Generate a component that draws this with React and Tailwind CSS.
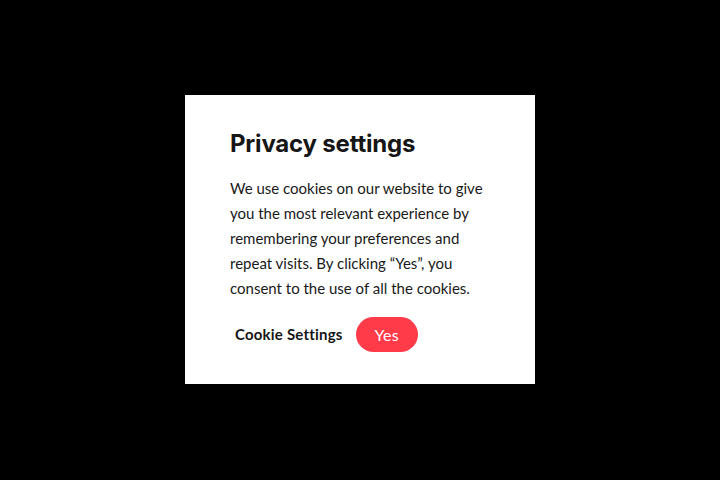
export default function App() {
  return (
    <div className="w-[720px] h-[480px] bg-black flex items-center justify-center font-['Lato','Noto_Sans',sans-serif]">
      <div className="w-[350px] h-[289px] bg-white pl-[45px] pr-[40px] pt-[33px] mb-[1px]">
        <h2 className="font-['Inter',sans-serif] text-[24px] leading-[32px] font-bold text-[#161616] tracking-[-0.2px]">
          Privacy settings
        </h2>
        <p className="mt-[16px] text-[15px] leading-[25px] text-[#1a1a1a]">
          We use cookies on our website to give you the most relevant experience by remembering your preferences and repeat visits. By clicking “Yes”, you consent to the use of all the cookies.
        </p>
        <div className="mt-[16px] flex items-center gap-[8px]">
          <button className="px-[5px] text-[15px] font-bold text-[#161616] tracking-[0.2px]">Cookie Settings</button>
          <button className="h-[35px] px-[19px] rounded-full bg-[#ff3b4a] text-white text-[16px] tracking-[0.3px]">Yes</button>
        </div>
      </div>
    </div>
  )
}
